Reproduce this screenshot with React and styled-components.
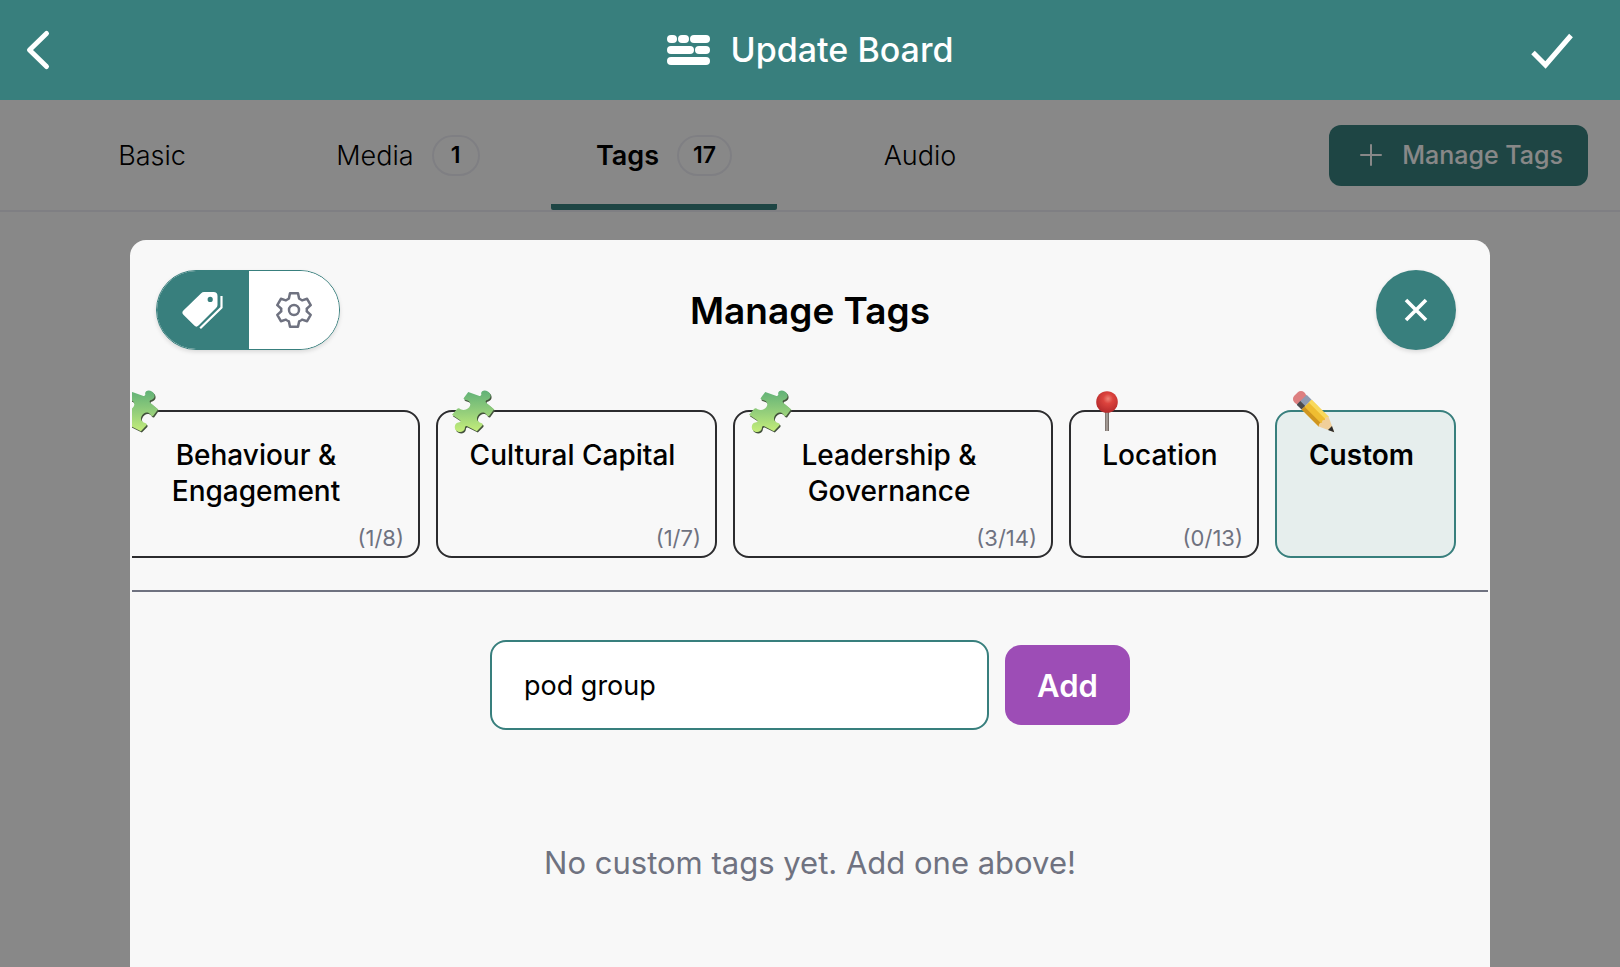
import React, { useState } from "react";
import styled, { createGlobalStyle } from "styled-components";

const teal = "#387f7d";
const grey = "#6f7280";

const GlobalStyle = createGlobalStyle`
  *, *::before, *::after { box-sizing: border-box; }
  body {
    margin: 0;
    background: #f8f8f8;
    color: #000;
    font-family: Inter, "Liberation Sans", sans-serif;
    overflow: hidden;
  }
  button, input { font: inherit; color: inherit; }
  button { border: 0; padding: 0; background: none; cursor: pointer; }
  svg { display: block; }
`;

const Page = styled.div`
  display: flex;
  flex-direction: column;
  min-height: 100vh;
`;

const TopBar = styled.header`
  display: grid;
  grid-template-columns: 1fr auto 1fr;
  align-items: center;
  height: 100px;
  padding: 0 40px 0 16px;
  background: ${teal};
  color: #fff;
`;

const TopButton = styled.button`
  justify-self: ${(p) => p.$side};
`;

const BoardTitle = styled.h1`
  display: flex;
  align-items: center;
  gap: 20px;
  margin: 0;
  padding-left: 24px;
  font-size: 34px;
  font-weight: 500;
  line-height: 44px;
`;

const Body = styled.div`
  position: relative;
  flex: 1;
`;

const TabBar = styled.div`
  display: flex;
  justify-content: space-between;
  height: 112px;
  padding: 0 32px 0 39px;
  border-bottom: 2px solid #e8e8ee;
`;

const Tabs = styled.nav`
  display: flex;
  gap: 30px;
`;

const Tab = styled.button`
  display: flex;
  align-items: center;
  justify-content: center;
  gap: 18px;
  width: 226px;
  padding-top: 6px;
  border-bottom: 6px solid ${(p) => (p.$active ? teal : "transparent")};
  border-radius: 2px;
  font-size: 27px;
  font-weight: ${(p) => (p.$active ? 600 : 300)};
`;

const Badge = styled.span`
  padding: 0 14px;
  min-width: 48px;
  border: 2px solid #e8e8ee;
  border-radius: 21px;
  font-size: 23px;
  font-weight: 600;
  line-height: 37px;
  text-align: center;
`;

const ManageButton = styled.button`
  display: flex;
  align-items: center;
  align-self: center;
  gap: 20px;
  height: 61px;
  padding: 0 25px 0 31px;
  border-radius: 12px;
  background: ${teal};
  color: #f8f8f8;
  font-size: 25px;
  font-weight: 500;
`;

const Overlay = styled.div`
  position: absolute;
  inset: 0;
  display: flex;
  justify-content: center;
  padding-top: 140px;
  background: rgba(0, 0, 0, 0.45);
`;

const Modal = styled.section`
  width: calc(100% - 64px);
  max-width: 1360px;
  border: 2px solid #f8f8f8;
  border-bottom: 0;
  border-radius: 16px 16px 0 0;
  background: #f8f8f8;
`;

const ModalHeader = styled.div`
  display: grid;
  grid-template-columns: 1fr auto 1fr;
  align-items: center;
  padding: 28px 32px 0 24px;
`;

const ModalTitle = styled.h2`
  margin: 0;
  padding: 2px 0 0 8px;
  font-size: 37px;
  font-weight: 600;
  line-height: 48px;
`;

const Toggle = styled.div`
  display: flex;
  justify-self: start;
  overflow: hidden;
  width: 184px;
  height: 80px;
  border: 1px solid ${teal};
  border-radius: 40px;
  box-shadow: 0 2px 4px rgba(0, 0, 0, 0.12);
`;

const ToggleOption = styled.button`
  display: grid;
  place-items: center;
  flex: ${(p) => (p.$active ? "0 0 92px" : "1")};
  background: ${(p) => (p.$active ? teal : "#fff")};
  color: ${(p) => (p.$active ? "#fff" : grey)};
`;

const CloseButton = styled.button`
  display: grid;
  place-items: center;
  justify-self: end;
  width: 80px;
  height: 80px;
  border-radius: 50%;
  background: ${teal};
  color: #fff;
  box-shadow: 0 2px 4px rgba(0, 0, 0, 0.12);
`;

const Categories = styled.div`
  display: flex;
  justify-content: flex-end;
  gap: 16px;
  overflow: hidden;
  padding: 60px 32px 32px;
  border-bottom: 2px solid ${grey};
`;

const Category = styled.button`
  position: relative;
  display: flex;
  flex-direction: column;
  justify-content: space-between;
  flex: 0 0 ${(p) => p.$width}px;
  height: 148px;
  padding: 25px 14px 4px 30px;
  border: 2px solid ${(p) => (p.$active ? teal : "#2c2c2e")};
  border-radius: 16px;
  background: ${(p) => (p.$active ? "#e6eeed" : "transparent")};
  font-weight: ${(p) => (p.$active ? 600 : 500)};
`;

const CategoryIcon = styled.span`
  position: absolute;
  top: -22px;
  left: 14px;
`;

const CategoryName = styled.span`
  align-self: stretch;
  padding-right: 24px;
  font-size: 28px;
  line-height: 36px;
  text-align: center;
`;

const CategoryCount = styled.span`
  align-self: flex-end;
  color: ${grey};
  font-size: 22px;
  font-weight: 400;
  line-height: 28px;
`;

const AddForm = styled.form`
  display: flex;
  align-items: center;
  justify-content: center;
  gap: 16px;
  padding-top: 48px;
`;

const TagInput = styled.input`
  width: 499px;
  height: 90px;
  padding: 0 32px;
  border: 2px solid ${teal};
  border-radius: 16px;
  outline: 0;
  background: #fff;
  font-size: 27px;
`;

const AddButton = styled.button`
  width: 125px;
  height: 80px;
  border-radius: 16px;
  background: #9d4db6;
  color: #fff;
  font-size: 31px;
  font-weight: 600;
`;

const EmptyNote = styled.p`
  margin: 0;
  padding: 113px 32px 40px;
  color: ${grey};
  font-size: 31px;
  line-height: 40px;
  text-align: center;
`;

const BackIcon = () => (
  <svg width="44" height="44" viewBox="0 0 44 44" fill="none" stroke="currentColor" strokeWidth="5" strokeLinecap="round" strokeLinejoin="round">
    <path d="M30.500 5.500 13.500 22 30.500 38.500" />
  </svg>
);

const CheckIcon = () => (
  <svg width="60" height="44" viewBox="0 0 60 44" fill="none" stroke="currentColor" strokeWidth="5">
    <path d="M13 24.500 25.500 37 51 7.500" />
  </svg>
);

const BoardIcon = () => (
  <svg width="44" height="30" viewBox="0 0 44 30" fill="currentColor">
    <rect x="0" y="0" width="10" height="8" rx="4" />
    <rect x="11" y="0" width="11" height="8" rx="4" />
    <rect x="23" y="0" width="20" height="8" rx="4" />
    <rect x="0" y="11" width="27" height="8" rx="4" />
    <rect x="28" y="11" width="15" height="8" rx="4" />
    <rect x="0" y="22" width="43" height="8" rx="4" />
  </svg>
);

const PlusIcon = () => (
  <svg width="22" height="22" viewBox="0 0 22 22" fill="none" stroke="currentColor" strokeWidth="2" strokeLinecap="round">
    <path d="M11 1v20M1 11h20" />
  </svg>
);

const CloseIcon = () => (
  <svg width="24" height="24" viewBox="0 0 24 24" fill="none" stroke="currentColor" strokeWidth="3.600">
    <path d="M2 2 22 22M22 2 2 22" />
  </svg>
);

const TagsIcon = () => (
  <svg width="44" height="40" viewBox="0 0 44 40">
    <path
      fill="currentColor"
      fillRule="evenodd"
      d="M23 2h9.500a4 4 0 0 1 4 4v9a4 4 0 0 1-1.200 2.800L17.500 35.600a3 3 0 0 1-4.200 0L2.400 24.700a3 3 0 0 1 0-4.200L20.200 3.200A4 4 0 0 1 23 2zM29.200 6.800a2.600 2.600 0 1 0 0 5.200 2.600 2.600 0 0 0 0-5.200z"
    />
    <path d="M40.500 6v11.500L19.200 38.200" fill="none" stroke="currentColor" strokeWidth="2.200" />
  </svg>
);

const GearIcon = () => (
  <svg width="36" height="36" viewBox="0 0 36 36" fill="none" stroke="currentColor" strokeWidth="2.500" strokeLinejoin="round">
    <path d="M14 1.300h8l1.100 5.300q1.700.7 3 1.800l5-1.600 3.600 6.300-4 3.600q.3 1.300 0 2.600l4 3.600-3.600 6.300-5-1.600q-1.300 1.100-3 1.800L22 34.700h-8l-1.100-5.300q-1.700-.7-3-1.800l-5 1.600-3.600-6.300 4-3.600q-.3-1.300 0-2.600l-4-3.600 3.600-6.300 5 1.600q1.300-1.100 3-1.800z" />
    <circle cx="18" cy="18" r="5" />
  </svg>
);

const puzzleOutline =
  "M17 2 28 6c2 .8 3-.6 2.500-2C30 1 34-.5 37.500 1.500c4 2.500 3.500 7 .5 8.500-2 1-3.500 1-2.500 3L44 20l-5 7c-1.500 1-2.500-.5-3.500-2-3-3-7.500-1-9 3-1.500 3.500 1.500 6 4 6.500 1.500.5 2 1.500 1 3L26 43l-10-5c-2-1-2.500.5-2.500 2-.5 4-6 5-9 2.500-3-3-1.500-8 2-8.500 2.500 0 3-1 2-2.500L0 26l5-6c1.500-1.500 2.500-1 4 0 4 2 9 0 10-4 .8-3.500-2-5-4.500-5.500-2-.5-3-1-2-2.500z";

const PuzzleIcon = () => (
  <svg width="44" height="44" viewBox="0 0 46 46">
    <defs>
      <linearGradient id="puzzle" x1="0" y1="0" x2="0" y2="1">
        <stop offset="0" stopColor="#61b177" />
        <stop offset="0.550" stopColor="#97d07b" />
        <stop offset="1" stopColor="#c5ee7a" />
      </linearGradient>
    </defs>
    <path d={puzzleOutline} fill="#43523c" transform="translate(1 1.500)" />
    <path d={puzzleOutline} fill="url(#puzzle)" />
  </svg>
);

const PinIcon = () => (
  <svg width="44" height="44" viewBox="0 0 44 44">
    <defs>
      <radialGradient id="pinHead" cx="0.550" cy="0.350" r="0.650">
        <stop offset="0" stopColor="#ee8275" />
        <stop offset="0.350" stopColor="#dc433d" />
        <stop offset="1" stopColor="#b52a2c" />
      </radialGradient>
      <linearGradient id="pinStem">
        <stop offset="0" stopColor="#716762" />
        <stop offset="0.500" stopColor="#b3aaa4" />
        <stop offset="1" stopColor="#5f5753" />
      </linearGradient>
    </defs>
    <rect x="20" y="19" width="4" height="22" fill="url(#pinStem)" />
    <circle cx="22" cy="12" r="10.800" fill="url(#pinHead)" />
  </svg>
);

const PencilIcon = () => (
  <svg width="46" height="46" viewBox="0 0 46 46">
    <g transform="translate(3 2) rotate(45 7 7)">
      <rect x="0" y="0" width="10" height="14" rx="4.500" fill="#dd7f80" />
      <rect x="8" y="0" width="7" height="14" fill="#8e9bb1" />
      <rect x="8" y="9" width="7" height="5" fill="#4c4b4d" />
      <path d="M15 0h24v14H15z" fill="#efbd31" />
      <path d="M15 0h24v4H15z" fill="#f8d95b" />
      <path d="M15 10h24v4H15z" fill="#cf951f" />
      <path d="M39 0 54 7 39 14c-2-2-2-4 0-5-2-1-2-3 0-4-2-1-2-3 0-5z" fill="#f0cf9a" />
      <path d="M48 4.200 54 7l-6 2.800z" fill="#2b2b2b" />
    </g>
  </svg>
);

const tabs = [
  { name: "Basic" },
  { name: "Media", count: 1 },
  { name: "Tags", count: 17 },
  { name: "Audio" },
];

const categories = [
  { name: "Behaviour & Engagement", count: "(1/8)", width: 320, Icon: PuzzleIcon },
  { name: "Cultural Capital", count: "(1/7)", width: 281, Icon: PuzzleIcon },
  { name: "Leadership & Governance", count: "(3/14)", width: 320, Icon: PuzzleIcon },
  { name: "Location", count: "(0/13)", width: 190, Icon: PinIcon },
  { name: "Custom", width: 181, Icon: PencilIcon },
];

export default function App() {
  const [tag, setTag] = useState("pod group");
  const [category, setCategory] = useState("Custom");

  return (
    <Page>
      <GlobalStyle />
      <TopBar>
        <TopButton $side="start" aria-label="Back"><BackIcon /></TopButton>
        <BoardTitle><BoardIcon />Update Board</BoardTitle>
        <TopButton $side="end" aria-label="Save"><CheckIcon /></TopButton>
      </TopBar>
      <Body>
        <TabBar>
          <Tabs>
            {tabs.map(({ name, count }) => (
              <Tab key={name} $active={name === "Tags"}>
                {name}
                {count && <Badge>{count}</Badge>}
              </Tab>
            ))}
          </Tabs>
          <ManageButton><PlusIcon />Manage Tags</ManageButton>
        </TabBar>
        <Overlay>
          <Modal role="dialog" aria-labelledby="manage-title">
            <ModalHeader>
              <Toggle>
                <ToggleOption $active aria-label="Tags"><TagsIcon /></ToggleOption>
                <ToggleOption aria-label="Settings"><GearIcon /></ToggleOption>
              </Toggle>
              <ModalTitle id="manage-title">Manage Tags</ModalTitle>
              <CloseButton aria-label="Close"><CloseIcon /></CloseButton>
            </ModalHeader>
            <Categories>
              {categories.map(({ name, count, width, Icon }) => (
                <Category key={name} $width={width} $active={name === category} onClick={() => setCategory(name)}>
                  <CategoryIcon><Icon /></CategoryIcon>
                  <CategoryName>{name}</CategoryName>
                  {count && <CategoryCount>{count}</CategoryCount>}
                </Category>
              ))}
            </Categories>
            <AddForm onSubmit={(e) => e.preventDefault()}>
              <TagInput aria-label="Custom tag" value={tag} onChange={(e) => setTag(e.target.value)} />
              <AddButton>Add</AddButton>
            </AddForm>
            <EmptyNote>No custom tags yet. Add one above!</EmptyNote>
          </Modal>
        </Overlay>
      </Body>
    </Page>
  );
}
